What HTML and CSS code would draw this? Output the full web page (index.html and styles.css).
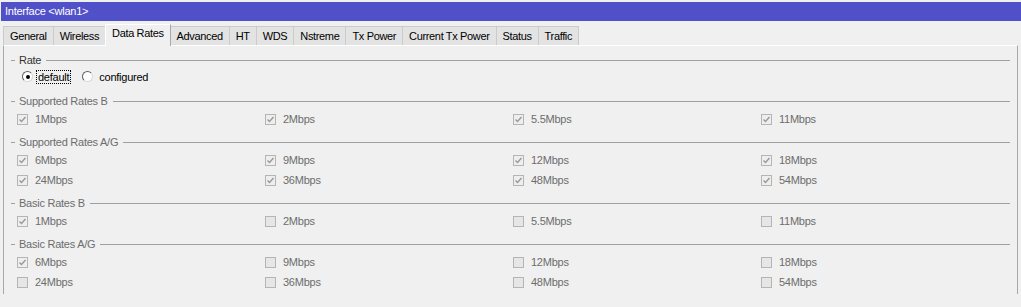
FILE: index.html
```html
<!DOCTYPE html>
<html lang="en">
    <head>
        <meta charset="UTF-8">
        <title>Interface &lt;wlan1&gt;</title>
        <link rel="stylesheet" href="styles.css">
    </head>
    <body>
        <div class="titlebar">Interface &lt;wlan1&gt;</div>

        <div class="tabs">
            <div class="tab">General</div>
            <div class="tab">Wireless</div>
            <div class="tab active">Data Rates</div>
            <div class="tab">Advanced</div>
            <div class="tab">HT</div>
            <div class="tab">WDS</div>
            <div class="tab">Nstreme</div>
            <div class="tab">Tx Power</div>
            <div class="tab">Current Tx Power</div>
            <div class="tab">Status</div>
            <div class="tab">Traffic</div>
        </div>

        <div class="panel">
            <div class="group rate">
                <div class="legend"><span>Rate</span></div>
                <div class="radios">
                    <label class="radio"><i class="dot checked"></i><span class="focus">default</span></label>
                    <label class="radio"><i class="dot"></i><span>configured</span></label>
                </div>
            </div>

            <div class="group">
                <div class="legend dim"><span>Supported Rates B</span></div>
                <div class="rows">
                    <label class="check"><i class="box on"></i>1Mbps</label>
                    <label class="check"><i class="box on"></i>2Mbps</label>
                    <label class="check"><i class="box on"></i>5.5Mbps</label>
                    <label class="check"><i class="box on"></i>11Mbps</label>
                </div>
            </div>

            <div class="group">
                <div class="legend dim"><span>Supported Rates A/G</span></div>
                <div class="rows">
                    <label class="check"><i class="box on"></i>6Mbps</label>
                    <label class="check"><i class="box on"></i>9Mbps</label>
                    <label class="check"><i class="box on"></i>12Mbps</label>
                    <label class="check"><i class="box on"></i>18Mbps</label>
                    <label class="check"><i class="box on"></i>24Mbps</label>
                    <label class="check"><i class="box on"></i>36Mbps</label>
                    <label class="check"><i class="box on"></i>48Mbps</label>
                    <label class="check"><i class="box on"></i>54Mbps</label>
                </div>
            </div>

            <div class="group">
                <div class="legend dim"><span>Basic Rates B</span></div>
                <div class="rows">
                    <label class="check"><i class="box on"></i>1Mbps</label>
                    <label class="check"><i class="box"></i>2Mbps</label>
                    <label class="check"><i class="box"></i>5.5Mbps</label>
                    <label class="check"><i class="box"></i>11Mbps</label>
                </div>
            </div>

            <div class="group last">
                <div class="legend dim"><span>Basic Rates A/G</span></div>
                <div class="rows">
                    <label class="check"><i class="box on"></i>6Mbps</label>
                    <label class="check"><i class="box"></i>9Mbps</label>
                    <label class="check"><i class="box"></i>12Mbps</label>
                    <label class="check"><i class="box"></i>18Mbps</label>
                    <label class="check"><i class="box"></i>24Mbps</label>
                    <label class="check"><i class="box"></i>36Mbps</label>
                    <label class="check"><i class="box"></i>48Mbps</label>
                    <label class="check"><i class="box"></i>54Mbps</label>
                </div>
            </div>
        </div>
    </body>
</html>
```

FILE: styles.css
```css
* {
    box-sizing: border-box;
}

body {
    margin: 0;
    padding-top: 2px;
    background-color: #f0f0f0;
    font-family: "Liberation Sans", Arial, sans-serif;
    font-size: 11px;
    letter-spacing: -0.25px;
    color: #000;
}

.titlebar {
    height: 19px;
    margin-left: 1px;
    padding-left: 4px;
    line-height: 19px;
    background-color: #5050c9;
    color: #fff;
}

.tabs {
    display: flex;
    align-items: flex-end;
    height: 24px;
    padding-left: 3px;
}

.tab {
    height: 19px;
    line-height: 18px;
    padding: 0 6px;
    letter-spacing: -0.35px;
    background-color: #e3e3e3;
    border: 1px solid #cbcbcb;
    border-bottom: none;
    margin-right: -1px;
}

.tab.active {
    position: relative;
    z-index: 1;
    height: 22px;
    line-height: 17px;
    margin-bottom: -1px;
    background-color: #f0f0f0;
    border-color: #d4d4d4;
    border-top-color: #fff;
    border-left-color: #fff;
    border-right-color: #a8a8a8;
}

.panel {
    margin: 0 3px 0 3px;
    width: 1015px;
    height: 249px;
    padding: 6px 7px 0 7px;
    border: 1px solid #a8a8a8;
    border-top-color: #fff;
    border-bottom: none;
    overflow: hidden;
}

.group {
    margin-bottom: 5px;
}

.group.rate {
    margin-bottom: 8px;
}

.group.last {
    margin-bottom: 0;
}

.legend {
    display: flex;
    align-items: center;
    height: 16px;
    color: #333;
}

.legend::before {
    content: "";
    width: 4px;
    margin-right: 4px;
    border-top: 1px solid #a0a0a0;
}

.legend::after {
    content: "";
    flex: 1;
    margin-left: 5px;
    border-top: 1px solid #a0a0a0;
}

.legend.dim {
    color: #6d6d6d;
}

.radios {
    display: flex;
    align-items: center;
    height: 17px;
    padding-left: 11px;
}

.radio {
    display: flex;
    align-items: center;
    margin-right: 6px;
}

.dot {
    position: relative;
    width: 11px;
    height: 11px;
    margin-right: 6px;
    border-radius: 50%;
    background-color: #fff;
    border: 1px solid;
    border-color: #5e5e5e #d8d8d8 #d8d8d8 #5e5e5e;
}

.dot.checked::after {
    content: "";
    position: absolute;
    left: 2.5px;
    top: 2.5px;
    width: 4px;
    height: 4px;
    border-radius: 50%;
    background-color: #000;
}

.focus {
    padding: 0 1px;
    margin-left: -2px;
    margin-right: 6px;
    line-height: 12px;
    outline: 1px dotted #000;
}

.rows {
    display: grid;
    grid-template-columns: repeat(4, 248px);
    grid-auto-rows: 20px;
    padding-left: 6px;
}

.check {
    display: flex;
    align-items: center;
    color: #6d6d6d;
}

.box {
    width: 11px;
    height: 11px;
    margin-right: 7px;
    border: 1px solid #b5b5b5;
    background-color: #e6e6e6;
}

.box.on {
    background-color: #eeeeee;
    background-image: url("data:image/svg+xml,%3Csvg xmlns='http://www.w3.org/2000/svg' width='9' height='9'%3E%3Cpolyline points='1.5,4.5 3.5,6.5 7.5,2' fill='none' stroke='%23999' stroke-width='1.4'/%3E%3C/svg%3E");
    background-repeat: no-repeat;
}
```
